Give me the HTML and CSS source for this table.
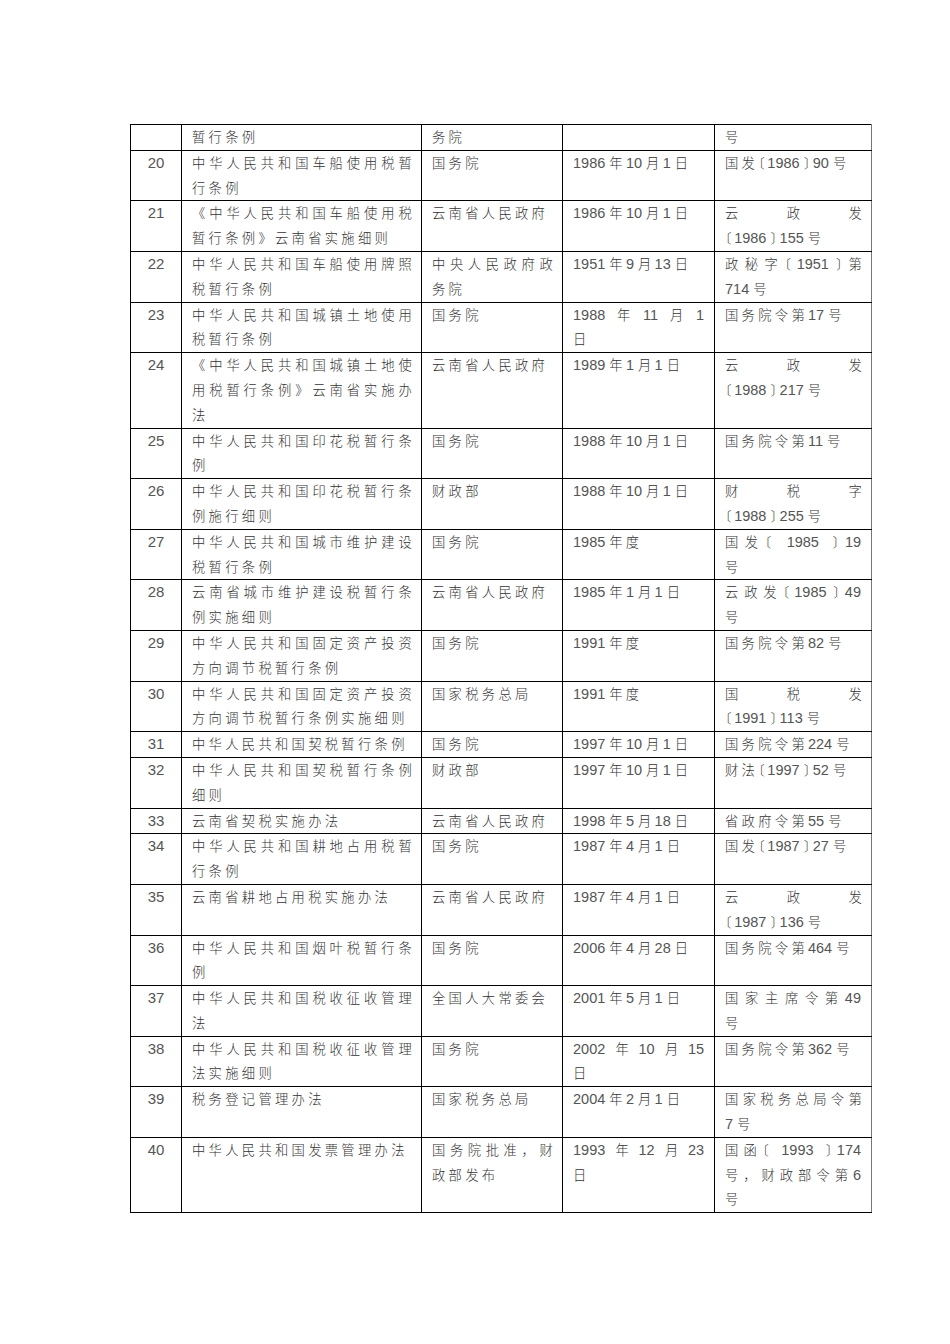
FILE: index.html
```html
<!DOCTYPE html>
<html lang="zh-CN">
<head>
<meta charset="utf-8">
<title>税收法规目录</title>
<link rel="stylesheet" href="styles.css">
</head>
<body>
<div class="page">
<table class="tbl">
<colgroup><col class="c1"><col class="c2"><col class="c3"><col class="c4"><col class="c5"></colgroup>
<tbody>
<tr><td class="no"></td><td>暂行条例</td><td>务院</td><td></td><td>号</td></tr>
<tr><td class="no">20</td><td><div class="j">中华人民共和国车船使用税暂</div><div>行条例</div></td><td>国务院</td><td><span class="n">1986</span>年<span class="n">10</span>月<span class="n">1</span>日</td><td>国发<span class="b">〔</span><span class="n">1986</span><span class="b">〕</span><span class="n">90</span>号</td></tr>
<tr><td class="no">21</td><td><div class="j">《中华人民共和国车船使用税</div><div>暂行条例》云南省实施细则</div></td><td>云南省人民政府</td><td><span class="n">1986</span>年<span class="n">10</span>月<span class="n">1</span>日</td><td><div class="j">云政发</div><div><span class="b">〔</span><span class="n">1986</span><span class="b">〕</span><span class="n">155</span>号</div></td></tr>
<tr><td class="no">22</td><td><div class="j">中华人民共和国车船使用牌照</div><div>税暂行条例</div></td><td><div class="j">中央人民政府政</div><div>务院</div></td><td><span class="n">1951</span>年<span class="n">9</span>月<span class="n">13</span>日</td><td><div class="j">政秘字<span class="b">〔</span><span class="n">1951</span><span class="b">〕</span>第</div><div><span class="n">714</span>号</div></td></tr>
<tr><td class="no">23</td><td><div class="j">中华人民共和国城镇土地使用</div><div>税暂行条例</div></td><td>国务院</td><td><div class="j"><span class="n">1988</span> 年 <span class="n">11</span> 月 <span class="n">1</span></div><div>日</div></td><td>国务院令第<span class="n">17</span>号</td></tr>
<tr><td class="no">24</td><td><div class="j">《中华人民共和国城镇土地使</div><div class="j">用税暂行条例》云南省实施办</div><div>法</div></td><td>云南省人民政府</td><td><span class="n">1989</span>年<span class="n">1</span>月<span class="n">1</span>日</td><td><div class="j">云政发</div><div><span class="b">〔</span><span class="n">1988</span><span class="b">〕</span><span class="n">217</span>号</div></td></tr>
<tr><td class="no">25</td><td><div class="j">中华人民共和国印花税暂行条</div><div>例</div></td><td>国务院</td><td><span class="n">1988</span>年<span class="n">10</span>月<span class="n">1</span>日</td><td>国务院令第<span class="n">11</span>号</td></tr>
<tr><td class="no">26</td><td><div class="j">中华人民共和国印花税暂行条</div><div>例施行细则</div></td><td>财政部</td><td><span class="n">1988</span>年<span class="n">10</span>月<span class="n">1</span>日</td><td><div class="j">财税字</div><div><span class="b">〔</span><span class="n">1988</span><span class="b">〕</span><span class="n">255</span>号</div></td></tr>
<tr><td class="no">27</td><td><div class="j">中华人民共和国城市维护建设</div><div>税暂行条例</div></td><td>国务院</td><td><span class="n">1985</span>年度</td><td><div class="j">国发<span class="b">〔</span> <span class="n">1985</span> <span class="b">〕</span><span class="n">19</span></div><div>号</div></td></tr>
<tr><td class="no">28</td><td><div class="j">云南省城市维护建设税暂行条</div><div>例实施细则</div></td><td>云南省人民政府</td><td><span class="n">1985</span>年<span class="n">1</span>月<span class="n">1</span>日</td><td><div class="j">云政发<span class="b">〔</span><span class="n">1985</span><span class="b">〕</span><span class="n">49</span></div><div>号</div></td></tr>
<tr><td class="no">29</td><td><div class="j">中华人民共和国固定资产投资</div><div>方向调节税暂行条例</div></td><td>国务院</td><td><span class="n">1991</span>年度</td><td>国务院令第<span class="n">82</span>号</td></tr>
<tr><td class="no">30</td><td><div class="j">中华人民共和国固定资产投资</div><div>方向调节税暂行条例实施细则</div></td><td>国家税务总局</td><td><span class="n">1991</span>年度</td><td><div class="j">国税发</div><div><span class="b">〔</span><span class="n">1991</span><span class="b">〕</span><span class="n">113</span>号</div></td></tr>
<tr><td class="no">31</td><td>中华人民共和国契税暂行条例</td><td>国务院</td><td><span class="n">1997</span>年<span class="n">10</span>月<span class="n">1</span>日</td><td>国务院令第<span class="n">224</span>号</td></tr>
<tr><td class="no">32</td><td><div class="j">中华人民共和国契税暂行条例</div><div>细则</div></td><td>财政部</td><td><span class="n">1997</span>年<span class="n">10</span>月<span class="n">1</span>日</td><td>财法<span class="b">〔</span><span class="n">1997</span><span class="b">〕</span><span class="n">52</span>号</td></tr>
<tr><td class="no">33</td><td>云南省契税实施办法</td><td>云南省人民政府</td><td><span class="n">1998</span>年<span class="n">5</span>月<span class="n">18</span>日</td><td>省政府令第<span class="n">55</span>号</td></tr>
<tr><td class="no">34</td><td><div class="j">中华人民共和国耕地占用税暂</div><div>行条例</div></td><td>国务院</td><td><span class="n">1987</span>年<span class="n">4</span>月<span class="n">1</span>日</td><td>国发<span class="b">〔</span><span class="n">1987</span><span class="b">〕</span><span class="n">27</span>号</td></tr>
<tr><td class="no">35</td><td>云南省耕地占用税实施办法</td><td>云南省人民政府</td><td><span class="n">1987</span>年<span class="n">4</span>月<span class="n">1</span>日</td><td><div class="j">云政发</div><div><span class="b">〔</span><span class="n">1987</span><span class="b">〕</span><span class="n">136</span>号</div></td></tr>
<tr><td class="no">36</td><td><div class="j">中华人民共和国烟叶税暂行条</div><div>例</div></td><td>国务院</td><td><span class="n">2006</span>年<span class="n">4</span>月<span class="n">28</span>日</td><td>国务院令第<span class="n">464</span>号</td></tr>
<tr><td class="no">37</td><td><div class="j">中华人民共和国税收征收管理</div><div>法</div></td><td>全国人大常委会</td><td><span class="n">2001</span>年<span class="n">5</span>月<span class="n">1</span>日</td><td><div class="j">国家主席令第<span class="n">49</span></div><div>号</div></td></tr>
<tr><td class="no">38</td><td><div class="j">中华人民共和国税收征收管理</div><div>法实施细则</div></td><td>国务院</td><td><div class="j"><span class="n">2002</span> 年 <span class="n">10</span> 月 <span class="n">15</span></div><div>日</div></td><td>国务院令第<span class="n">362</span>号</td></tr>
<tr><td class="no">39</td><td>税务登记管理办法</td><td>国家税务总局</td><td><span class="n">2004</span>年<span class="n">2</span>月<span class="n">1</span>日</td><td><div class="j">国家税务总局令第</div><div><span class="n">7</span>号</div></td></tr>
<tr><td class="no">40</td><td>中华人民共和国发票管理办法</td><td><div class="j">国务院批准，财</div><div>政部发布</div></td><td><div class="j"><span class="n">1993</span> 年 <span class="n">12</span> 月 <span class="n">23</span></div><div>日</div></td><td><div class="j">国函<span class="b">〔</span> <span class="n">1993</span> <span class="b">〕</span><span class="n">174</span></div><div class="j">号，财政部令第<span class="n">6</span></div><div>号</div></td></tr>
</tbody>
</table>
</div>
</body>
</html>
```

FILE: styles.css
```css
html, body {
  margin: 0;
  padding: 0;
  background: #ffffff;
}

.page {
  padding: 124px 0 0 130px;
}

.tbl {
  border-collapse: collapse;
  table-layout: fixed;
  width: 741px;
  font-family: "Noto Sans CJK SC", "Liberation Sans", sans-serif;
  font-size: 13.3px;
  font-weight: 300;
  line-height: 24.8px;
  color: #333333;
  letter-spacing: 3.3px;
}

.c1 { width: 51px; }
.c2 { width: 240px; }
.c3 { width: 141px; }
.c4 { width: 152px; }
.c5 { width: 157px; }

.tbl td {
  border: 1px solid #000;
  padding: 0 6px 0 10px;
  vertical-align: top;
  white-space: nowrap;
  overflow: hidden;
}

.tbl td:last-child {
  border-right-color: #777;
}

.tbl td.no {
  text-align: center;
  padding: 0;
  letter-spacing: 0;
  font-family: "Liberation Sans", sans-serif;
  font-size: 15px;
  font-weight: 400;
  color: #555555;
}

.n {
  font-family: "Liberation Sans", sans-serif;
  font-size: 14.5px;
  font-weight: 400;
  line-height: 1;
  letter-spacing: 0;
  margin-right: 4px;
  color: #555555;
}

.b {
  font-feature-settings: "halt";
  letter-spacing: 2.5px;
}

.j {
  text-align: justify;
  text-align-last: justify;
}
```
